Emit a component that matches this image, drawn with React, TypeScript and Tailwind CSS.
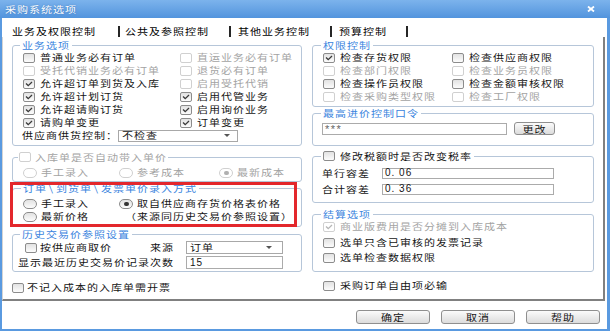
import type { ReactNode } from "react"

const dark = "text-[#141414]"
const grey = "text-[#a3a3a3]"
const blue = "text-[#3a84de]"

// the dialog text is a little flattened, as in the screenshot
function T({ children, className = "" }: { children: ReactNode; className?: string }) {
  return <span className={`inline-block scale-y-[0.8] ${className}`}>{children}</span>
}

function Box({ checked, disabled }: { checked?: boolean; disabled?: boolean }) {
  return (
    <span
      className={`flex h-[10px] w-[12px] shrink-0 items-center justify-center rounded-[2px] border ${
        disabled ? "border-[#d0d0d0] bg-white" : "border-[#8c8c8c] bg-linear-to-b from-[#e2e2e2] to-[#fcfcfc]"
      }`}
    >
      {checked && (
        <svg width="8" height="6" viewBox="0 0 8 6">
          <path d="M1 2.6 3.2 4.6 7 1" fill="none" stroke={disabled ? "#b6b6b6" : "#3a3a3a"} strokeWidth="1.3" />
        </svg>
      )}
    </span>
  )
}

function Dot({ on, disabled }: { on?: boolean; disabled?: boolean }) {
  return (
    <span
      className={`flex h-[10px] w-[14px] shrink-0 items-center justify-center rounded-full border ${
        disabled ? "border-[#d0d0d0] bg-white" : "border-[#8c8c8c] bg-linear-to-b from-[#e2e2e2] to-[#fcfcfc]"
      }`}
    >
      {on && <span className={`h-[4px] w-[5px] rounded-full ${disabled ? "bg-[#b0b0b0]" : "bg-[#333]"}`} />}
    </span>
  )
}

function Check({
  label,
  checked,
  disabled,
  tight,
  className = "",
}: {
  label: string
  checked?: boolean
  disabled?: boolean
  tight?: boolean
  className?: string
}) {
  return (
    <div className={`flex h-[13px] items-center ${tight ? "gap-[3px]" : "gap-[5px]"} ${className}`}>
      <Box checked={checked} disabled={disabled} />
      <T className={disabled ? grey : dark}>{label}</T>
    </div>
  )
}

function Radio({ label, on, disabled }: { label: string; on?: boolean; disabled?: boolean }) {
  return (
    <div className="flex h-[13px] items-center gap-[4px]">
      <Dot on={on} disabled={disabled} />
      <T className={disabled ? grey : dark}>{label}</T>
    </div>
  )
}

function Group({
  title,
  className = "",
  titleClass = "",
  children,
}: {
  title: ReactNode
  className?: string
  titleClass?: string
  children?: ReactNode
}) {
  return (
    <div className={`rounded-[3px] border border-[#b6c6d9] ${className}`}>
      <div className={`-mt-[7px] h-[12px] w-fit bg-white leading-[12px] ${titleClass}`}>{title}</div>
      {children}
    </div>
  )
}

function Select({ value, className = "" }: { value: string; className?: string }) {
  return (
    <div className={`flex items-center justify-between border border-[#a8a8a8] bg-white pl-[3px] ${className}`}>
      <T className="leading-[11px]">{value}</T>
      <svg width="6" height="3" viewBox="0 0 6 3">
        <path d="M0 0h6L3 3z" fill="#555" />
      </svg>
    </div>
  )
}

function Field({ value, className = "" }: { value: string; className?: string }) {
  return (
    <div
      className={`flex items-center border border-[#ababab] bg-white pl-[2px] font-['Liberation_Sans',sans-serif] text-[10px] leading-[10px] ${className}`}
    >
      {value}
    </div>
  )
}

function Btn({ label, className = "" }: { label: string; className?: string }) {
  return (
    <div
      className={`flex items-center justify-center rounded-[3px] border border-[#8f8f8f] bg-linear-to-b from-[#fbfbfb] to-[#dcdcdc] leading-[12px] ${className}`}
    >
      <T>{label}</T>
    </div>
  )
}

const tabs = [
  { label: "业务及权限控制", cls: "w-[106px]" },
  { label: "公共及参照控制", cls: "ml-[5px] w-[104px]" },
  { label: "其他业务控制", cls: "ml-[7px] w-[92px]" },
  { label: "预算控制", cls: "ml-[7px] w-[67px]" },
]

export default function App() {
  return (
    <div className="flex h-[331px] w-[610px] flex-col overflow-hidden bg-[#5a9ae0] font-['Noto_Sans_CJK_SC',sans-serif] text-[11px] leading-[13px] tracking-[1px] text-[#141414]">
      {/* title bar */}
      <div className="flex h-[18px] shrink-0 items-center justify-between bg-linear-to-b from-[#7cb3ec] to-[#5294dd] pl-[5px] pr-[15px]">
        <T className="text-white [text-shadow:0_0_2px_#3b74b8]">采购系统选项</T>
        <svg width="8" height="6" viewBox="0 0 8 6">
          <path d="M1 0.5 7 5.5M7 0.5 1 5.5" stroke="#fff" strokeWidth="1.8" />
        </svg>
      </div>

      <div className="mb-[2px] ml-[2px] mr-[3px] flex flex-1 flex-col bg-white">
        {/* tabs */}
        <div className="flex h-[19px] shrink-0 pl-[10px] pt-[7px]">
          {tabs.map((t) => (
            <div key={t.label} className="flex">
              <span className={t.cls}>
                <T className="text-black">{t.label}</T>
              </span>
              <span className="mt-[1px] h-[11px] w-[2px] bg-[#262626]" />
            </div>
          ))}
        </div>

        {/* panel */}
        <div className="mr-[2px] flex h-[264px] shrink-0 gap-[10px] border-b-2 border-l border-r-2 border-[#808080] border-l-[#d4d4d4] pl-[9px]">
          {/* left column */}
          <div className="flex w-[290px] flex-col">
            <Group title={<T>业务选项</T>} className="mt-[8px] h-[101px]" titleClass={`ml-[7px] px-[2px] ${blue}`}>
              <div className="grid grid-cols-[157px_1fr] pl-[10px]">
                <Check label="普通业务必有订单" />
                <Check label="直运业务必有订单" disabled />
                <Check label="受托代销业务必有订单" disabled />
                <Check label="退货必有订单" disabled />
                <Check label="允许超订单到货及入库" checked />
                <Check label="启用受托代销" disabled />
                <Check label="允许超计划订货" checked />
                <Check label="启用代管业务" checked />
                <Check label="允许超请购订货" checked />
                <Check label="启用询价业务" checked />
                <Check label="请购单变更" checked />
                <Check label="订单变更" checked />
              </div>
              <div className="flex h-[13px] items-center pl-[9px]">
                <span className="w-[96px]">
                  <T>供应商供货控制：</T>
                </span>
                <Select value="不检查" className="h-[12px] w-[120px] pr-[7px]" />
              </div>
            </Group>

            <Group
              title={
                <>
                  <Box disabled />
                  <T className={grey}>入库单是否自动带入单价</T>
                </>
              }
              className="mt-[11px] h-[25px]"
              titleClass="ml-[5px] flex items-center gap-[4px] px-[1px]"
            >
              <div className="mt-[3px] grid grid-cols-[96px_100px_1fr] pl-[10px]">
                <Radio label="手工录入" disabled />
                <Radio label="参考成本" disabled />
                <Radio label="最新成本" on disabled />
              </div>
            </Group>

            <Group
              title={
                <T>
                  订单<span className="inline-block w-[9px] text-center">\</span>到货单
                  <span className="inline-block w-[9px] text-center">\</span>发票单价录入方式
                </T>
              }
              className="relative mt-[6px] h-[39px]"
              titleClass={`ml-[8px] px-[2px] ${blue}`}
            >
              <div className="mt-[3px] grid grid-cols-[96px_1fr] pl-[10px]">
                <Radio label="手工录入" />
                <Radio label="取自供应商存货价格表价格" on />
                <Radio label="最新价格" />
                <div className="flex h-[13px] items-center pl-[6px]">
                  <T>（来源同历史交易价参照设置）</T>
                </div>
              </div>
              <span className="pointer-events-none absolute -left-[3px] -top-[7px] h-[45px] w-[287px] border-[3px] border-[#e3272c]" />
            </Group>

            <Group title={<T>历史交易价参照设置</T>} className="mt-[7px] h-[38px]" titleClass={`ml-[7px] px-[2px] ${blue}`}>
              <div className="mt-[1px] flex h-[13px] items-center pl-[12px]">
                <Check label="按供应商取价" tight className="w-[125px]" />
                <span className="w-[36px]">
                  <T>来源</T>
                </span>
                <Select value="订单" className="h-[13px] w-[97px] pr-[10px]" />
              </div>
              <div className="mt-[2px] flex h-[13px] items-center pl-[5px]">
                <span className="w-[168px]">
                  <T>显示最近历史交易价记录次数</T>
                </span>
                <Field value="15" className="h-[13px] w-[97px] pl-[3px]" />
              </div>
            </Group>

            <Check label="不记入成本的入库单需开票" tight className="mt-[9px]" />
          </div>

          {/* right column */}
          <div className="flex w-[282px] flex-col">
            <Group title={<T>权限控制</T>} className="mt-[8px] h-[62px]" titleClass={`ml-[8px] px-[2px] ${blue}`}>
              <div className="grid grid-cols-[129px_1fr] pl-[10px]">
                <Check label="检查存货权限" checked />
                <Check label="检查供应商权限" />
                <Check label="检查部门权限" disabled />
                <Check label="检查业务员权限" disabled />
                <Check label="检查操作员权限" />
                <Check label="检查金额审核权限" />
                <Check label="检查采购类型权限" disabled />
                <Check label="检查工厂权限" disabled />
              </div>
            </Group>

            <Group title={<T>最高进价控制口令</T>} className="mt-[6px] h-[33px]" titleClass={`ml-[8px] px-[2px] ${blue}`}>
              <div className="mt-[3px] flex items-center pl-[9px]">
                <Field value="***" className="h-[12px] w-[185px] pl-[1px] text-[11px] tracking-[1.5px] text-[#666]" />
                <Btn label="更改" className="ml-[7px] h-[13px] w-[41px]" />
              </div>
            </Group>

            <Group
              title={
                <>
                  <Box />
                  <T>修改税额时是否改变税率</T>
                </>
              }
              className="mt-[10px] h-[47px]"
              titleClass="ml-[8px] flex items-center gap-[5px] px-[2px]"
            >
              <div className="mt-[5px] flex h-[12px] items-center pl-[9px]">
                <span className="w-[60px]">
                  <T>单行容差</T>
                </span>
                <Field value="0. 06" className="h-[11px] w-[172px]" />
              </div>
              <div className="mt-[4px] flex h-[12px] items-center pl-[9px]">
                <span className="w-[60px]">
                  <T>合计容差</T>
                </span>
                <Field value="0. 36" className="h-[11px] w-[172px]" />
              </div>
            </Group>

            <Group title={<T>结算选项</T>} className="mt-[11px] h-[58px]" titleClass={`ml-[8px] px-[2px] ${blue}`}>
              <div className="pl-[10px]">
                <Check label="商业版费用是否分摊到入库成本" checked disabled />
                <Check label="选单只含已审核的发票记录" className="mt-[3px]" />
                <Check label="选单检查数据权限" className="mt-[2px]" />
              </div>
            </Group>

            <Check label="采购订单自由项必输" className="mt-[7px] pl-[11px]" />
          </div>
        </div>

        {/* buttons */}
        <div className="flex justify-end gap-[11px] pr-[7px] pt-[9px]">
          <Btn label="确定" className="h-[14px] w-[74px]" />
          <Btn label="取消" className="h-[14px] w-[74px]" />
          <Btn label="帮助" className="h-[14px] w-[74px]" />
        </div>
      </div>
    </div>
  )
}
